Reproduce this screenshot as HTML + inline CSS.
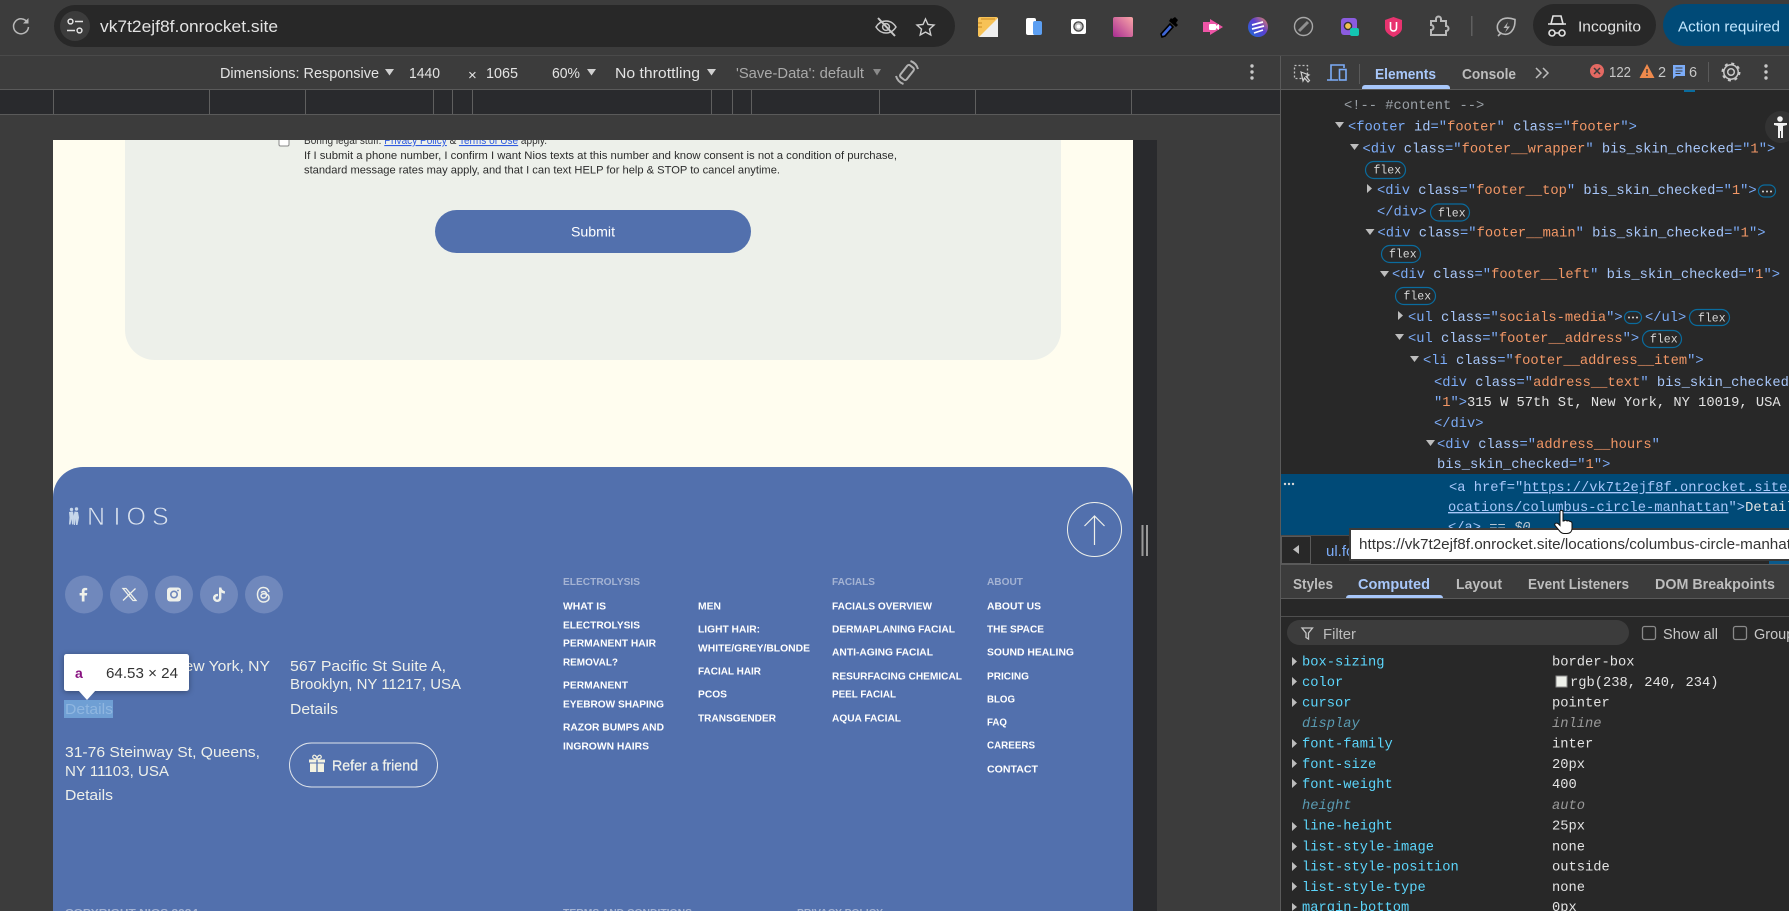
<!DOCTYPE html>
<html lang="en">
<head>
<meta charset="utf-8">
<title>Nios footer in DevTools</title>
<style>
html,body{margin:0;padding:0;background:#3c3c3c;width:1789px;height:911px;overflow:hidden}
#frame{position:absolute;left:0;top:0;width:1789px;height:911px;overflow:hidden}
svg{display:block;position:absolute;left:0;top:0}
text{white-space:pre}
.s{font-family:"Liberation Sans",sans-serif}
.m{font-family:"Liberation Mono",monospace;font-size:13.75px;fill:#e3e3e3}
.tb{font-size:15px;fill:#e3e3e3}
.t{fill:#7cacf8}.a{fill:#a8c7fa}.v{fill:#f29766}.w{fill:#e3e3e3}
.f{fill:#fff;font-size:10.5px;font-weight:700}
.h{fill:#a4b3d3;font-size:10.5px;font-weight:700}
.ad{fill:#eef0ea;font-size:15.2px}
.k{fill:#5cd5fb}.d{fill:#5a9bb2;font-style:italic}.g{fill:#9a9a9a;font-style:italic}
.fb{fill:none;stroke:#0a6c9e;stroke-width:1.2}
.ft{font-family:"Liberation Mono",monospace;font-size:11.5px;fill:#d8d8d8}
.tri{fill:#bdbdbd}
.tab{font-size:14.6px;font-weight:700;fill:#bdbdbd}
</style>
</head>
<body>
<div id="frame">
<svg width="1789" height="911" viewBox="0 0 1789 911" xmlns="http://www.w3.org/2000/svg">
<defs>
<linearGradient id="pk" x1="1" y1="0" x2="0" y2="1"><stop offset="0" stop-color="#fba7a7"/><stop offset="1" stop-color="#a82c92"/></linearGradient>
<linearGradient id="bl" x1="1" y1="0" x2="0" y2="1"><stop offset="0" stop-color="#f08a5d"/><stop offset=".45" stop-color="#5b3fd0"/><stop offset="1" stop-color="#1a6fd8"/></linearGradient>
<clipPath id="pg"><rect x="53" y="140" width="1080" height="771"/></clipPath>
</defs>

<!-- browser chrome -->
<rect width="1789" height="911" fill="#3c3c3c"/>
<rect x="0" y="55" width="1789" height="1" fill="#4a4a4a"/>
<path d="M27.5 22.5A7.5 7.5 0 1 0 28.5 27" fill="none" stroke="#b8b8b8" stroke-width="1.5"/><path d="M28.5 18v5.500h-5.500z" fill="#b8b8b8"/>
<rect x="54" y="5" width="901" height="42" rx="21" fill="#282828"/>
<circle cx="75" cy="26" r="15" fill="#3c3c3c"/>
<g fill="none" stroke="#e3e3e3" stroke-width="1.5"><circle cx="70.5" cy="21.5" r="2.4"/><circle cx="79.5" cy="30.5" r="2.4"/><path d="M75 21.5h8M67 30.5h8"/></g>
<text x="100" y="32" class="s" font-size="17" fill="#e3e3e3" textLength="178" lengthAdjust="spacingAndGlyphs">vk7t2ejf8f.onrocket.site</text>
<g fill="none" stroke="#c7c7c7" stroke-width="1.5"><path d="M876 27c5-8 15-8 20 0-5 8-15 8-20 0z"/><circle cx="886" cy="27" r="3.400"/><path d="M878 18l17 18" stroke-width="2"/></g>
<path d="M925.500 19l2.500 5.500 6 .6-4.500 4 1.300 5.900-5.300-3-5.300 3 1.300-5.900-4.500-4 6-.6z" fill="none" stroke="#d0d0d0" stroke-width="1.400"/>

<!-- extensions -->
<rect x="978" y="17" width="20" height="20" rx="2" fill="#f7c257"/><path d="M998 18v19h-19z" fill="#efefef"/><path d="M981 19h14M978 23h4M978 27h4" stroke="#c98a20" stroke-width="1"/>
<rect x="1026" y="18" width="10" height="17" rx="2" fill="#fff"/><rect x="1033" y="21" width="9" height="14" rx="2" fill="#5c9ff2"/>
<rect x="1071" y="19" width="15" height="15" rx="2" fill="#fff"/><circle cx="1078.5" cy="26.5" r="4.6" fill="#bbb" stroke="#444" stroke-width="1.3"/><circle cx="1078.5" cy="26.5" r="2" fill="#fff"/>
<rect x="1113" y="17" width="20" height="20" rx="2" fill="url(#pk)"/>
<path d="M1161 34l1 3 3-1 8-9-3-3z" fill="#3f66d6" stroke="#000" stroke-width="1.6"/><path d="M1169 21l7 6 2-2-2-2 2-3-3-3-3 2-1-1z" fill="#000"/>
<path d="M1203 22h7v-3l13 8-13 8v-3h-7z" fill="#ee55a6"/><rect x="1209" y="24" width="7" height="6" rx="1" fill="#fff"/><path d="M1216 26l3-2v6l-3-2z" fill="#fff"/>
<circle cx="1258" cy="27" r="10" fill="url(#bl)"/><path d="M1252 25l11-3M1252 29l12-3M1254 33l9-3" stroke="#fff" stroke-width="1.7"/>
<circle cx="1303.5" cy="26.5" r="9" fill="none" stroke="#a8a8a8" stroke-width="1.4"/><path d="M1299 31l9-9" stroke="#8f8f8f" stroke-width="3"/>
<rect x="1341" y="18" width="16" height="17" rx="3" fill="#8b5ce0"/><circle cx="1348" cy="26" r="3.6" fill="#f2c14e" stroke="#333" stroke-width="1.4"/><rect x="1350" y="28" width="9" height="8" rx="2" fill="#14c6b2"/>
<path d="M1393.5 17l8.500 3v8c0 4-4 7-8.500 9-4.500-2-8.500-5-8.500-9v-8z" fill="#e8336f"/><path d="M1390.500 22v6c0 4 6 4 6 0v-6" fill="none" stroke="#fff" stroke-width="1.600"/>
<path d="M1431 21h5v-2a2 2 0 0 1 5 0v2h5v5a2.500 2.500 0 0 1 0 5v4h-15v-5a2 2 0 0 0 0-5z" fill="none" stroke="#b8b8b8" stroke-width="2"/>
<rect x="1471" y="16" width="1.500" height="20" fill="#5f5f5f"/>
<path d="M1515 19.500c-6-2-12-2-15.500 2-3.500 4-2.500 9.500 1 11.500 3 2 8 2 11-1.500 3-3.500 3.500-7 3.500-12zM1498 36l3.500-3.500" fill="none" stroke="#b8b8b8" stroke-width="1.600"/><path d="M1508 22l-4.500 6h3.500l-2 4.500 5-6h-3.500z" fill="#b8b8b8"/>

<rect x="1533" y="4" width="123" height="42" rx="21" fill="#282828"/>
<g fill="none" stroke="#e3e3e3" stroke-width="1.600"><circle cx="1552" cy="33" r="3"/><circle cx="1562" cy="33" r="3"/><path d="M1555 33h4M1548 24h18"/></g><path d="M1551 24l2-8h8l2 8z" fill="none" stroke="#e3e3e3" stroke-width="1.600"/>
<text x="1578" y="31.500" class="s" font-size="15" fill="#e3e3e3" textLength="63" lengthAdjust="spacingAndGlyphs">Incognito</text>
<path d="M1789 4h-105a21 21 0 0 0 0 42h105z" fill="#004a77"/>
<text x="1678" y="31.500" class="s" font-size="15" fill="#c2e7ff" textLength="102" lengthAdjust="spacingAndGlyphs">Action required</text>

<!-- device toolbar -->
<g class="s">
<text x="220" y="78" class="tb" textLength="159" lengthAdjust="spacingAndGlyphs">Dimensions: Responsive</text>
<path d="M385 69h9l-4.500 6.500z" fill="#d0d0d0"/>
<text x="409" y="78" class="tb" textLength="31" lengthAdjust="spacingAndGlyphs">1440</text>
<text x="468" y="80" class="tb" fill="#c0c0c0">×</text>
<text x="486" y="78" class="tb" textLength="32" lengthAdjust="spacingAndGlyphs">1065</text>
<text x="552" y="78" class="tb" textLength="28" lengthAdjust="spacingAndGlyphs">60%</text>
<path d="M587 69h9l-4.500 6.500z" fill="#d0d0d0"/>
<text x="615" y="78" class="tb" textLength="85" lengthAdjust="spacingAndGlyphs">No throttling</text>
<path d="M707 69h9l-4.500 6.500z" fill="#d0d0d0"/>
<text x="736" y="78" font-size="15" fill="#aaaaaa" textLength="128" lengthAdjust="spacingAndGlyphs">'Save-Data': default</text>
<path d="M873 69h8l-4 6.500z" fill="#8a8a8a"/>
</g>
<g fill="none" stroke="#b0b0b0"><rect x="-4" y="-7.500" width="8" height="15" rx="2" stroke-width="2" transform="translate(907 72.500) rotate(38)"/><path d="M896 76a12 12 0 0 0 7.500 8M918 69a12 12 0 0 0-7.500-8" stroke-width="2"/></g>
<g fill="#c8c8c8"><circle cx="1252" cy="66" r="1.700"/><circle cx="1252" cy="72" r="1.700"/><circle cx="1252" cy="78" r="1.700"/></g>

<!-- ruler -->
<rect x="0" y="89" width="1280" height="25" fill="#292a2d"/>
<rect x="0" y="89" width="1280" height="1" fill="#5a5a5a"/>
<rect x="0" y="114" width="1280" height="1" fill="#5a5a5a"/>
<g fill="#5f5f5f"><rect x="53" y="90" width="1" height="24"/><rect x="209" y="90" width="1" height="24"/><rect x="305" y="90" width="1" height="24"/><rect x="433" y="90" width="1" height="24"/><rect x="452" y="90" width="1" height="24"/><rect x="472" y="90" width="1" height="24"/><rect x="711" y="90" width="1" height="24"/><rect x="732" y="90" width="1" height="24"/><rect x="751" y="90" width="1" height="24"/><rect x="879" y="90" width="1" height="24"/><rect x="975" y="90" width="1" height="24"/><rect x="1131" y="90" width="1" height="24"/></g>

<!-- page -->
<rect x="1133" y="140" width="24" height="771" fill="#292a2d"/>
<rect x="53" y="140" width="1080" height="771" fill="#fffdef"/>
<g clip-path="url(#pg)">
<rect x="125" y="100" width="936" height="260" rx="30" fill="#edf0ea"/>
<rect x="279" y="137" width="10" height="9" rx="1.500" fill="#fff" stroke="#888" stroke-width="1"/>
<text x="304" y="144" class="s" font-size="11" fill="#333" textLength="243" lengthAdjust="spacingAndGlyphs">Boring legal stuff: <tspan fill="#2f5be0" text-decoration="underline">Privacy Policy</tspan> &amp; <tspan fill="#2f5be0" text-decoration="underline">Terms of Use</tspan> apply.</text>
<text x="304" y="159" class="s" font-size="11" fill="#2c2c2c" textLength="593" lengthAdjust="spacingAndGlyphs">If I submit a phone number, I confirm I want Nios texts at this number and know consent is not a condition of purchase,</text>
<text x="304" y="173.500" class="s" font-size="11" fill="#2c2c2c" textLength="476" lengthAdjust="spacingAndGlyphs">standard message rates may apply, and that I can text HELP for help &amp; STOP to cancel anytime.</text>
<rect x="435" y="210" width="316" height="43" rx="21.500" fill="#5270ad"/>
<text x="571" y="236.500" class="s" font-size="14" fill="#fff" textLength="44" lengthAdjust="spacingAndGlyphs">Submit</text>

<!-- footer -->
<rect x="53" y="467" width="1080" height="500" rx="30" fill="#5270ad"/>
<g fill="#c6d6ea"><circle cx="71.500" cy="509.500" r="1.700"/><circle cx="76.500" cy="509" r="1.700"/><path d="M69 512l4-.5 1 5-.5 8h-1.500l-.5-5.500-1 5.500h-1.500l.5-7z"/><path d="M74.500 511.500l3.500.5 1 5.500-1.500 7.500h-1.500l-.5-6-.5 6h-1l-.5-8z"/></g>
<text class="s" font-size="25" fill="#dbe3ef" style="stroke:#5270ad;stroke-width:.7" y="525" x="87 113.500 126.500 152">NIOS</text>
<g fill="none" stroke="#eef0ea" stroke-width="1"><circle cx="1094.500" cy="529.500" r="27"/></g>
<path d="M1094.500 545v-29M1084.500 526l10-10 10 10" fill="none" stroke="#eef0ea" stroke-width="1.200"/>

<g fill="#7088bc"><circle cx="84" cy="594.500" r="19"/><circle cx="129" cy="594.500" r="19"/><circle cx="174" cy="594.500" r="19"/><circle cx="219" cy="594.500" r="19"/><circle cx="264" cy="594.500" r="19"/></g>
<path d="M84.500 601.500v-6h2.400l.4-2.500h-2.800v-1.600c0-.8.300-1.200 1.200-1.200h1.500v-2.200c-.4 0-1.200-.1-2-.1-2.200 0-3.400 1.200-3.400 3.400v1.700h-2.200v2.500h2.200v6z" fill="#eef0ea"/>
<path d="M123 588.500h3l10 12h-3zM135.500 588.500l-12.500 12" fill="none" stroke="#eef0ea" stroke-width="1.300"/>
<rect x="167" y="587.500" width="14" height="14" rx="3" fill="#eef0ea"/><circle cx="174" cy="594.500" r="3.200" fill="none" stroke="#7088bc" stroke-width="1.600"/><circle cx="178" cy="590.500" r=".9" fill="#7088bc"/>
<path d="M219 587.500h2.400c.2 2 1.500 3.400 3.500 3.600v2.500c-1.400 0-2.500-.4-3.500-1.100v5.400c0 2.600-2 4.100-4.200 4.100-2.300 0-4.200-1.800-4.200-4.100 0-2.500 2.200-4.500 5-4v2.500c-1.300-.4-2.500.3-2.500 1.500 0 1 .8 1.700 1.700 1.700 1 0 1.800-.7 1.800-1.900z" fill="#eef0ea"/>
<path d="M269 592c-.8-3-3-4.500-5.500-4.500-3.700 0-6 2.800-6 7s2.300 7.500 6 7.500c3.200 0 5.500-1.800 5.500-4.300 0-2.800-2.500-4-5-4-1.700 0-3 .8-3 2.200s1.200 2.100 2.500 2.100c1.800 0 3-1.300 3-3.300 0-2-1.200-3.200-3-3.200-1 0-1.800.4-2.400 1.100" fill="none" stroke="#eef0ea" stroke-width="1.500"/>

<g class="s">
<text x="65" y="671" class="ad" textLength="205" lengthAdjust="spacingAndGlyphs">315 W 57th St, New York, NY</text>
<text x="65" y="689" class="ad">10019, USA</text>
<rect x="64" y="700" width="49" height="18" fill="#6f9fd4"/>
<text x="65" y="714" class="ad" style="fill:#8fb6e0" textLength="48" lengthAdjust="spacingAndGlyphs">Details</text>
<text x="290" y="671" class="ad" textLength="156" lengthAdjust="spacingAndGlyphs">567 Pacific St Suite A,</text>
<text x="290" y="689" class="ad" textLength="171" lengthAdjust="spacingAndGlyphs">Brooklyn, NY 11217, USA</text>
<text x="290" y="714" class="ad" textLength="48" lengthAdjust="spacingAndGlyphs">Details</text>
<text x="65" y="757" class="ad" textLength="195" lengthAdjust="spacingAndGlyphs">31-76 Steinway St, Queens,</text>
<text x="65" y="776" class="ad" textLength="104" lengthAdjust="spacingAndGlyphs">NY 11103, USA</text>
<text x="65" y="800" class="ad" textLength="48" lengthAdjust="spacingAndGlyphs">Details</text>
</g>
<rect x="289.500" y="743" width="148" height="44" rx="22" fill="none" stroke="#dfe4ea" stroke-width="1"/>
<path d="M309 759.500h16v3h-16zM310 763.500h14v8.500h-14z" fill="#f4f2e0"/><path d="M317 759v13" stroke="#5270ad" stroke-width="1.300"/><path d="M317 759c-3 0-5-1-4-3s4 0 4 3c0-3 3-5 4-3s-1 3-4 3z" fill="none" stroke="#f4f2e0" stroke-width="1.200"/>
<text x="332" y="770.500" class="s" font-size="14.500" fill="#eef0ea" textLength="86" lengthAdjust="spacingAndGlyphs" style="stroke:#eef0ea;stroke-width:.25">Refer a friend</text>

<g class="s">
<text x="563" y="585" class="h" textLength="77" lengthAdjust="spacingAndGlyphs">ELECTROLYSIS</text>
<text x="832" y="585" class="h" textLength="43" lengthAdjust="spacingAndGlyphs">FACIALS</text>
<text x="987" y="585" class="h" textLength="36" lengthAdjust="spacingAndGlyphs">ABOUT</text>

<text x="563" y="609.500" class="f" textLength="43" lengthAdjust="spacingAndGlyphs">WHAT IS</text>
<text x="563" y="628.500" class="f" textLength="77" lengthAdjust="spacingAndGlyphs">ELECTROLYSIS</text>
<text x="563" y="646.500" class="f" textLength="93" lengthAdjust="spacingAndGlyphs">PERMANENT HAIR</text>
<text x="563" y="665.500" class="f" textLength="55" lengthAdjust="spacingAndGlyphs">REMOVAL?</text>
<text x="563" y="688.500" class="f" textLength="65" lengthAdjust="spacingAndGlyphs">PERMANENT</text>
<text x="563" y="707.500" class="f" textLength="101" lengthAdjust="spacingAndGlyphs">EYEBROW SHAPING</text>
<text x="563" y="730.500" class="f" textLength="101" lengthAdjust="spacingAndGlyphs">RAZOR BUMPS AND</text>
<text x="563" y="749.500" class="f" textLength="86" lengthAdjust="spacingAndGlyphs">INGROWN HAIRS</text>

<text x="698" y="609.500" class="f" textLength="23" lengthAdjust="spacingAndGlyphs">MEN</text>
<text x="698" y="632.500" class="f" textLength="62" lengthAdjust="spacingAndGlyphs">LIGHT HAIR:</text>
<text x="698" y="651.500" class="f" textLength="112" lengthAdjust="spacingAndGlyphs">WHITE/GREY/BLONDE</text>
<text x="698" y="674.500" class="f" textLength="63" lengthAdjust="spacingAndGlyphs">FACIAL HAIR</text>
<text x="698" y="697.500" class="f" textLength="29" lengthAdjust="spacingAndGlyphs">PCOS</text>
<text x="698" y="721.500" class="f" textLength="78" lengthAdjust="spacingAndGlyphs">TRANSGENDER</text>

<text x="832" y="609.500" class="f" textLength="100" lengthAdjust="spacingAndGlyphs">FACIALS OVERVIEW</text>
<text x="832" y="632.500" class="f" textLength="123" lengthAdjust="spacingAndGlyphs">DERMAPLANING FACIAL</text>
<text x="832" y="655.500" class="f" textLength="101" lengthAdjust="spacingAndGlyphs">ANTI-AGING FACIAL</text>
<text x="832" y="679.500" class="f" textLength="130" lengthAdjust="spacingAndGlyphs">RESURFACING CHEMICAL</text>
<text x="832" y="697.500" class="f" textLength="64" lengthAdjust="spacingAndGlyphs">PEEL FACIAL</text>
<text x="832" y="721.500" class="f" textLength="69" lengthAdjust="spacingAndGlyphs">AQUA FACIAL</text>

<text x="987" y="609.500" class="f" textLength="54" lengthAdjust="spacingAndGlyphs">ABOUT US</text>
<text x="987" y="632.500" class="f" textLength="57" lengthAdjust="spacingAndGlyphs">THE SPACE</text>
<text x="987" y="655.500" class="f" textLength="87" lengthAdjust="spacingAndGlyphs">SOUND HEALING</text>
<text x="987" y="679.500" class="f" textLength="42" lengthAdjust="spacingAndGlyphs">PRICING</text>
<text x="987" y="702.500" class="f" textLength="28" lengthAdjust="spacingAndGlyphs">BLOG</text>
<text x="987" y="725.500" class="f" textLength="20" lengthAdjust="spacingAndGlyphs">FAQ</text>
<text x="987" y="748.500" class="f" textLength="48" lengthAdjust="spacingAndGlyphs">CAREERS</text>
<text x="987" y="772.500" class="f" textLength="51" lengthAdjust="spacingAndGlyphs">CONTACT</text>

<text x="65" y="916" class="h" textLength="133" lengthAdjust="spacingAndGlyphs">COPYRIGHT NIOS 2024</text>
<text x="563" y="916" class="h" textLength="129" lengthAdjust="spacingAndGlyphs">TERMS AND CONDITIONS</text>
<text x="797" y="916" class="h" textLength="86" lengthAdjust="spacingAndGlyphs">PRIVACY POLICY</text>
</g>

<!-- inspector tooltip -->
<rect x="64" y="654" width="125" height="37" rx="2.500" fill="#fff" style="filter:drop-shadow(0 1px 3px rgba(0,0,0,.35))"/>
<path d="M78 690h18l-9 10z" fill="#fff"/>
<text x="75" y="678" class="s" font-size="14" font-weight="700" fill="#881280">a</text>
<text x="106" y="678" class="s" font-size="14.500" fill="#333" textLength="72" lengthAdjust="spacingAndGlyphs">64.53 × 24</text>
</g>

<!-- resize handle -->
<rect x="1141.500" y="525" width="2" height="31" fill="#9a9a9a"/><rect x="1146" y="525" width="2" height="31" fill="#9a9a9a"/>

<!-- devtools -->
<rect x="1280" y="56" width="509" height="855" fill="#3c3c3c"/>
<rect x="1280" y="56" width="1" height="855" fill="#5a5a5a"/>
<rect x="1281" y="90" width="508" height="445" fill="#282828"/>
<rect x="1281" y="89" width="508" height="1" fill="#5a5a5a"/>

<rect x="1294.500" y="65.500" width="13" height="13" fill="none" stroke="#c0c0c0" stroke-width="1.300" stroke-dasharray="2 2"/><path d="M1301 72l8 3-3 1.500 3.500 4-1.500 1.500-3.500-4-1.500 3z" fill="#3c3c3c" stroke="#d0d0d0" stroke-width="1.200"/>
<path d="M1338 80h-11M1331 80v-15h13v3" fill="none" stroke="#7cacf8" stroke-width="1.600"/><rect x="1339.500" y="69.500" width="6.500" height="10.500" fill="none" stroke="#7cacf8" stroke-width="1.600"/>
<rect x="1359" y="64" width="1" height="20" fill="#5a5a5a"/>
<text x="1375" y="79" class="s tab" style="fill:#a8c7fa" textLength="61" lengthAdjust="spacingAndGlyphs">Elements</text>
<path d="M1362 89v-1a3 3 0 0 1 3-3h82a3 3 0 0 1 3 3v1z" fill="#a8c7fa"/>
<text x="1462" y="79" class="s tab" textLength="54" lengthAdjust="spacingAndGlyphs">Console</text>
<path d="M1536 68l5 5-5 5M1543 68l5 5-5 5" fill="none" stroke="#bdbdbd" stroke-width="1.500"/>
<circle cx="1597" cy="71" r="7" fill="#e46962"/><path d="M1594 68l6 6M1600 68l-6 6" stroke="#3c3c3c" stroke-width="1.500"/>
<text x="1609" y="77" class="s" font-size="14.500" fill="#c7c7c7" textLength="22" lengthAdjust="spacingAndGlyphs">122</text>
<path d="M1647 64l7.500 14h-15z" fill="#f08a4c"/><path d="M1647 69v4M1647 74.500v1.500" stroke="#3c3c3c" stroke-width="1.400"/>
<text x="1658" y="77" class="s" font-size="14.500" fill="#c7c7c7">2</text>
<path d="M1673 65h12v11h-9l-3 3z" fill="#7cacf8"/><path d="M1675.500 68h7M1675.500 71h7M1675.500 73.500h5" stroke="#3c3c3c" stroke-width="1"/>
<text x="1689" y="77" class="s" font-size="14.500" fill="#c7c7c7">6</text>
<rect x="1708" y="62" width="1" height="20" fill="#5a5a5a"/>
<circle cx="1731" cy="72" r="3.300" fill="none" stroke="#c7c7c7" stroke-width="1.500"/><circle cx="1731" cy="72" r="7.200" fill="none" stroke="#c7c7c7" stroke-width="1.500"/><circle cx="1731" cy="72" r="8.500" fill="none" stroke="#c7c7c7" stroke-width="2" stroke-dasharray="3 3.670"/>
<g fill="#c8c8c8"><circle cx="1766" cy="66" r="1.700"/><circle cx="1766" cy="72" r="1.700"/><circle cx="1766" cy="78" r="1.700"/></g>
<rect x="1684" y="90" width="11" height="2" fill="#0a6c9e"/>

<!-- DOM tree -->
<text x="1344" y="109" class="m" style="fill:#9aa0a6">&lt;!-- #content --&gt;</text>
<path d="M1335 122h9l-4.500 6z" class="tri"/>
<text x="1348" y="130.500" class="m"><tspan class="t">&lt;footer</tspan> <tspan class="a">id</tspan><tspan class="t">="</tspan><tspan class="v">footer</tspan><tspan class="t">"</tspan> <tspan class="a">class</tspan><tspan class="t">="</tspan><tspan class="v">footer</tspan><tspan class="t">"&gt;</tspan></text>
<path d="M1350 144h9l-4.500 6z" class="tri"/>
<text x="1362.500" y="152.500" class="m"><tspan class="t">&lt;div</tspan> <tspan class="a">class</tspan><tspan class="t">="</tspan><tspan class="v">footer__wrapper</tspan><tspan class="t">"</tspan> <tspan class="a">bis_skin_checked</tspan><tspan class="t">="</tspan><tspan class="v">1</tspan><tspan class="t">"&gt;</tspan></text>
<rect x="1365.500" y="161.500" width="40" height="17" rx="8.500" class="fb"/><text x="1373.500" y="173.500" class="ft">flex</text>
<path d="M1367 184v9l5-4.500z" class="tri"/>
<text x="1377" y="194" class="m"><tspan class="t">&lt;div</tspan> <tspan class="a">class</tspan><tspan class="t">="</tspan><tspan class="v">footer__top</tspan><tspan class="t">"</tspan> <tspan class="a">bis_skin_checked</tspan><tspan class="t">="</tspan><tspan class="v">1</tspan><tspan class="t">"&gt;</tspan></text>
<rect x="1758.500" y="185" width="17" height="12" rx="6" class="fb"/><g fill="#d8d8d8"><circle cx="1763" cy="191.500" r="1"/><circle cx="1767" cy="191.500" r="1"/><circle cx="1771" cy="191.500" r="1"/></g>
<text x="1377" y="215.500" class="m"><tspan class="t">&lt;/div&gt;</tspan></text>
<rect x="1430.500" y="204" width="39" height="17" rx="8.500" class="fb"/><text x="1438" y="216.500" class="ft">flex</text>
<path d="M1365.500 229h9l-4.500 6z" class="tri"/>
<text x="1377.500" y="236.500" class="m"><tspan class="t">&lt;div</tspan> <tspan class="a">class</tspan><tspan class="t">="</tspan><tspan class="v">footer__main</tspan><tspan class="t">"</tspan> <tspan class="a">bis_skin_checked</tspan><tspan class="t">="</tspan><tspan class="v">1</tspan><tspan class="t">"&gt;</tspan></text>
<rect x="1381.500" y="245.500" width="39" height="17" rx="8.500" class="fb"/><text x="1389" y="257.500" class="ft">flex</text>
<path d="M1380 271h9l-4.500 6z" class="tri"/>
<text x="1392" y="278" class="m"><tspan class="t">&lt;div</tspan> <tspan class="a">class</tspan><tspan class="t">="</tspan><tspan class="v">footer__left</tspan><tspan class="t">"</tspan> <tspan class="a">bis_skin_checked</tspan><tspan class="t">="</tspan><tspan class="v">1</tspan><tspan class="t">"&gt;</tspan></text>
<rect x="1395.500" y="287.500" width="40" height="17" rx="8.500" class="fb"/><text x="1403.500" y="299.500" class="ft">flex</text>
<path d="M1398 311v9l5-4.500z" class="tri"/>
<text x="1408" y="321" class="m"><tspan class="t">&lt;ul</tspan> <tspan class="a">class</tspan><tspan class="t">="</tspan><tspan class="v">socials-media</tspan><tspan class="t">"&gt;</tspan></text>
<rect x="1624.500" y="311.500" width="17" height="12" rx="6" class="fb"/><g fill="#d8d8d8"><circle cx="1629" cy="317.500" r="1"/><circle cx="1633" cy="317.500" r="1"/><circle cx="1637" cy="317.500" r="1"/></g>
<text x="1645" y="321" class="m"><tspan class="t">&lt;/ul&gt;</tspan></text>
<rect x="1689.500" y="309.500" width="40" height="16" rx="8" class="fb"/><text x="1698" y="321.500" class="ft">flex</text>
<path d="M1395 334h9l-4.500 6z" class="tri"/>
<text x="1408" y="342" class="m"><tspan class="t">&lt;ul</tspan> <tspan class="a">class</tspan><tspan class="t">="</tspan><tspan class="v">footer__address</tspan><tspan class="t">"&gt;</tspan></text>
<rect x="1642.500" y="330.500" width="39" height="17" rx="8.500" class="fb"/><text x="1650" y="342.500" class="ft">flex</text>
<path d="M1410 356h9l-4.500 6z" class="tri"/>
<text x="1423" y="364" class="m"><tspan class="t">&lt;li</tspan> <tspan class="a">class</tspan><tspan class="t">="</tspan><tspan class="v">footer__address__item</tspan><tspan class="t">"&gt;</tspan></text>
<text x="1434" y="386" class="m"><tspan class="t">&lt;div</tspan> <tspan class="a">class</tspan><tspan class="t">="</tspan><tspan class="v">address__text</tspan><tspan class="t">"</tspan> <tspan class="a">bis_skin_checked</tspan><tspan class="t">=</tspan></text>
<text x="1434" y="406" class="m"><tspan class="t">"</tspan><tspan class="v">1</tspan><tspan class="t">"&gt;</tspan><tspan class="w">315 W 57th St, New York, NY 10019, USA</tspan></text>
<text x="1434" y="427" class="m"><tspan class="t">&lt;/div&gt;</tspan></text>
<path d="M1426 440h9l-4.500 6z" class="tri"/>
<text x="1437" y="448" class="m"><tspan class="t">&lt;div</tspan> <tspan class="a">class</tspan><tspan class="t">="</tspan><tspan class="v">address__hours</tspan><tspan class="t">"</tspan></text>
<text x="1437" y="468" class="m"><tspan class="a">bis_skin_checked</tspan><tspan class="t">="</tspan><tspan class="v">1</tspan><tspan class="t">"&gt;</tspan></text>

<rect x="1281" y="474" width="508" height="61" fill="#004a77"/>
<g fill="#d8d8d8"><circle cx="1285" cy="484" r="1.200"/><circle cx="1289" cy="484" r="1.200"/><circle cx="1293" cy="484" r="1.200"/></g>
<text x="1449" y="491" class="m"><tspan class="a">&lt;a href</tspan><tspan class="a">="</tspan><tspan class="a" text-decoration="underline">https://vk7t2ejf8f.onrocket.site/l</tspan></text>
<text x="1448" y="511" class="m"><tspan class="a" text-decoration="underline">ocations/columbus-circle-manhattan</tspan><tspan class="a">"&gt;</tspan><tspan class="w">Details</tspan></text>
<text x="1448" y="531" class="m"><tspan class="a">&lt;/a&gt;</tspan><tspan style="fill:#b8c4d0"> == </tspan><tspan style="fill:#b8c4d0;font-style:italic">$0</tspan></text>

<!-- breadcrumb -->
<rect x="1281" y="535" width="508" height="29" fill="#282828"/>
<rect x="1281" y="535" width="508" height="1" fill="#4a4a4a"/>
<rect x="1281.500" y="536.500" width="29" height="27" fill="none" stroke="#5a5a5a"/>
<path d="M1299 545v9l-6-4.500z" fill="#bdbdbd"/>
<text x="1326" y="556" class="s" font-size="15" fill="#7cacf8">ul.fo</text>
<rect x="1769" y="560" width="20" height="4" fill="#0a5a8c"/>

<!-- link tooltip -->
<rect x="1350" y="529" width="445" height="31" fill="#fff" stroke="#3a3a3a" stroke-width="2"/>
<text x="1359" y="549" class="s" font-size="14.500" fill="#333" textLength="432" lengthAdjust="spacingAndGlyphs">https://vk7t2ejf8f.onrocket.site/locations/columbus-circle-manhat</text>

<!-- sidebar tabs -->
<rect x="1281" y="564" width="508" height="1" fill="#5a5a5a"/>
<rect x="1281" y="565" width="508" height="34" fill="#3c3c3c"/>
<text x="1293" y="589" class="s tab" textLength="40" lengthAdjust="spacingAndGlyphs">Styles</text>
<text x="1358" y="589" class="s tab" style="fill:#a8c7fa" textLength="72" lengthAdjust="spacingAndGlyphs">Computed</text>
<path d="M1346 599v-1a3 3 0 0 1 3-3h91a3 3 0 0 1 3 3v1z" fill="#a8c7fa"/>
<text x="1456" y="589" class="s tab" textLength="46" lengthAdjust="spacingAndGlyphs">Layout</text>
<text x="1528" y="589" class="s tab" textLength="101" lengthAdjust="spacingAndGlyphs">Event Listeners</text>
<text x="1655" y="589" class="s tab" textLength="120" lengthAdjust="spacingAndGlyphs">DOM Breakpoints</text>
<rect x="1281" y="598" width="508" height="1" fill="#5a5a5a"/>
<rect x="1281" y="599" width="508" height="312" fill="#282828"/>
<rect x="1281" y="616" width="508" height="1" fill="#4f4f4f"/>

<!-- filter -->
<rect x="1287" y="620" width="342" height="25" rx="12.500" fill="#3c3c3c"/>
<path d="M1302 628h10.500l-4 5v6l-2.500-1.500V633z" fill="none" stroke="#c7c7c7" stroke-width="1.300"/>
<text x="1323" y="639" class="s" font-size="14.500" fill="#bdbdbd" textLength="33" lengthAdjust="spacingAndGlyphs">Filter</text>
<rect x="1642.500" y="626.500" width="13" height="13" rx="2" fill="none" stroke="#8a8a8a" stroke-width="1.300"/>
<text x="1663" y="639" class="s" font-size="14.500" fill="#c7c7c7" textLength="55" lengthAdjust="spacingAndGlyphs">Show all</text>
<rect x="1733.500" y="626.500" width="13" height="13" rx="2" fill="none" stroke="#8a8a8a" stroke-width="1.300"/>
<text x="1754" y="639" class="s" font-size="14.500" fill="#c7c7c7">Group</text>

<!-- computed list -->
<g>
<path d="M1292 657v9l5-4.500zM1292 677v9l5-4.500zM1292 698v9l5-4.500zM1292 739v9l5-4.500zM1292 759v9l5-4.500zM1292 779v9l5-4.500zM1292 822v9l5-4.500zM1292 842v9l5-4.500zM1292 862v9l5-4.500zM1292 882v9l5-4.500zM1292 903v8l5-4z" class="tri"/>
<text x="1302" y="665.500" class="m"><tspan class="k">box-sizing</tspan></text><text x="1552" y="665.500" class="m">border-box</text>
<text x="1302" y="686" class="m"><tspan class="k">color</tspan></text><rect x="1556" y="676" width="11" height="11" fill="#eef0ea" stroke="#8a8a8a"/><text x="1570" y="686" class="m">rgb(238, 240, 234)</text>
<text x="1302" y="706.500" class="m"><tspan class="k">cursor</tspan></text><text x="1552" y="706.500" class="m">pointer</text>
<text x="1302" y="727" class="m"><tspan class="d">display</tspan></text><text x="1552" y="727" class="m"><tspan class="g">inline</tspan></text>
<text x="1302" y="747.500" class="m"><tspan class="k">font-family</tspan></text><text x="1552" y="747.500" class="m">inter</text>
<text x="1302" y="768" class="m"><tspan class="k">font-size</tspan></text><text x="1552" y="768" class="m">20px</text>
<text x="1302" y="788" class="m"><tspan class="k">font-weight</tspan></text><text x="1552" y="788" class="m">400</text>
<text x="1302" y="809" class="m"><tspan class="d">height</tspan></text><text x="1552" y="809" class="m"><tspan class="g">auto</tspan></text>
<text x="1302" y="829.500" class="m"><tspan class="k">line-height</tspan></text><text x="1552" y="829.500" class="m">25px</text>
<text x="1302" y="850.500" class="m"><tspan class="k">list-style-image</tspan></text><text x="1552" y="850.500" class="m">none</text>
<text x="1302" y="870.500" class="m"><tspan class="k">list-style-position</tspan></text><text x="1552" y="870.500" class="m">outside</text>
<text x="1302" y="891" class="m"><tspan class="k">list-style-type</tspan></text><text x="1552" y="891" class="m">none</text>
<text x="1302" y="911" class="m"><tspan class="k">margin-bottom</tspan></text><text x="1552" y="911" class="m">0px</text>
</g>

<!-- accessibility button -->
<circle cx="1781" cy="127" r="16" fill="#333"/>
<g fill="#f0f0f0"><circle cx="1780" cy="119" r="2.800"/><path d="M1774 123h13v2l-4 1v12h-2v-7h-1v7h-2v-12l-4-1z"/></g>

<!-- hand cursor -->
<path d="M1560 511c1-1 3-1 3 1v9l1 0c1-1 2-1 3 0 1-.500 2-.500 3 .500 1 0 2 .500 2 2v5c0 3-2 5-5 5h-3c-2 0-3-1-4-2l-5-6c-1-2 1-3 3-2l2 2v-14z" fill="#fff" stroke="#111" stroke-width="1"/>
</svg>
</div>
</body>
</html>
